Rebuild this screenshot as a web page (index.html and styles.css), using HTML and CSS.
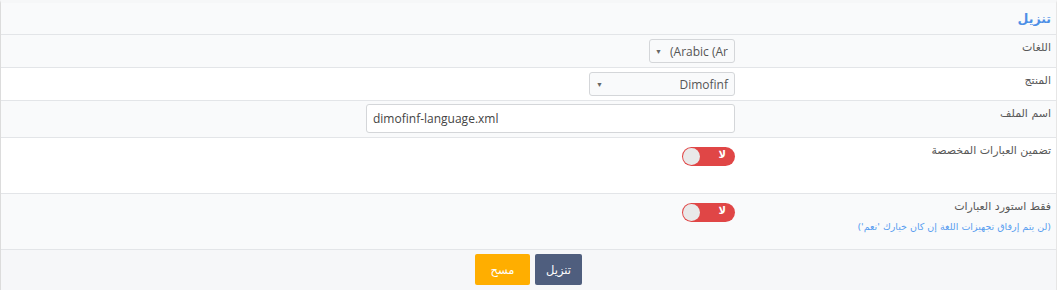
FILE: index.html
```html
<!DOCTYPE html>
<html lang="ar" dir="rtl">
<head>
  <meta charset="UTF-8">
  <title>تنزيل</title>
  <link rel="stylesheet" href="styles.css">
</head>
<body>
  <div class="panel">
    <div class="panel-head">تنزيل</div>

    <div class="row alt">
      <div class="label">اللغات</div>
      <div class="field">
        <div class="select lang-select"><span dir="ltr">(Arabic (Ar</span><i class="caret">▼</i></div>
      </div>
    </div>

    <div class="row">
      <div class="label">المنتج</div>
      <div class="field">
        <div class="select product-select"><span dir="ltr">Dimofinf</span><i class="caret">▼</i></div>
      </div>
    </div>

    <div class="row alt file-row">
      <div class="label">اسم الملف</div>
      <div class="field">
        <input type="text" class="text-input" value="dimofinf-language.xml" dir="ltr">
      </div>
    </div>

    <div class="row tall">
      <div class="label">تضمين العبارات المخصصة</div>
      <div class="field">
        <div class="toggle"><span class="toggle-text">لا</span><span class="knob"></span></div>
      </div>
    </div>

    <div class="row alt tall">
      <div class="label">
        فقط استورد العبارات
        <div class="hint">(لن يتم إرفاق تجهيزات اللغة إن كان خيارك 'نعم')</div>
      </div>
      <div class="field">
        <div class="toggle"><span class="toggle-text">لا</span><span class="knob"></span></div>
      </div>
    </div>

    <div class="panel-foot">
      <button class="btn btn-primary">تنزيل</button>
      <button class="btn btn-warning">مسح</button>
    </div>
  </div>
</body>
</html>
```

FILE: styles.css
```css
/* Global */
body {
  margin: 0;
  padding: 0;
  font-family: "DejaVu Sans", "Open Sans", sans-serif;
  font-size: 12px;
  color: #555;
  background: #fff;
}

.panel {
  border-left: 1px solid #dcdcdc;
  border-right: 1px solid #e6e6e6;
  border-top: 3px solid #f6f7f8;
  background: #f9fafb;
}

.panel-head {
  height: 30px;
  line-height: 32px;
  padding-right: 5px;
  color: #4d8fe6;
  font-weight: bold;
  font-size: 12.5px;
  border-bottom: 1px solid #e3e5e8;
  margin-bottom: 0;
  height: 31px;
}

/* Rows */
.row {
  display: flex;
  background: #fff;
  border-bottom: 1px solid #e3e5e8;
  height: 32px;
}
.row.alt {
  background: #f9fafb;
}
.row.file-row {
  height: 36px;
}
.row.tall {
  height: 55px;
}

.label {
  width: 307px;
  padding: 6px 5px 0 0;
  font-size: 11px;
  color: #585858;
  flex-shrink: 0;
}
.hint {
  margin-top: 8px;
  font-size: 9.5px;
  color: #5a9ef0;
}

.field {
  padding: 4px 9px 0 0;
  flex: 1;
}

/* Selects */
.select {
  display: flex;
  justify-content: space-between;
  align-items: center;
  height: 22px;
  border: 1px solid #d4d6d9;
  border-radius: 3px;
  background: #f9fafb;
  padding: 0 6px 0 6px;
  font-family: "Open Sans", sans-serif;
  font-size: 12px;
  color: #555;
  overflow: hidden;
  white-space: nowrap;
}
.caret {
  font-style: normal;
  font-size: 7px;
  color: #666;
  margin-right: 8px;
}
.lang-select {
  width: 72px;
}
.product-select {
  width: 132px;
}

/* Text input */
.text-input {
  display: block;
  width: 355px;
  height: 27px;
  box-sizing: content-box;
  padding: 0 6px;
  border: 1px solid #d4d6d9;
  border-radius: 3px;
  background: #fff;
  font-family: "Open Sans", sans-serif;
  font-size: 12px;
  color: #444;
  outline: none;
  text-align: left;
}
.file-row .field {
  padding-top: 3px;
}

/* Toggle */
.tall .field {
  padding-top: 9px;
}
.toggle {
  position: relative;
  width: 53px;
  height: 19px;
  border-radius: 10px;
  background: #e04646;
}
.toggle-text {
  position: absolute;
  right: 9px;
  top: 2px;
  color: #fff;
  font-weight: bold;
  font-size: 10px;
}
.knob {
  position: absolute;
  left: 1px;
  top: 1px;
  width: 17px;
  height: 17px;
  border-radius: 50%;
  background: #e9e9e9;
}

/* Footer */
.panel-foot {
  display: flex;
  justify-content: center;
  gap: 5px;
  padding-top: 4px;
  height: 37px;
  background: #f6f7f9;
}
.btn {
  height: 31px;
  border: none;
  border-radius: 2px;
  color: #fff;
  font-family: "DejaVu Sans", sans-serif;
  font-size: 11.5px;
  cursor: pointer;
}
.btn-primary {
  width: 47px;
  background: #4f5e7e;
}
.btn-warning {
  width: 55px;
  background: #ffae00;
}
```
